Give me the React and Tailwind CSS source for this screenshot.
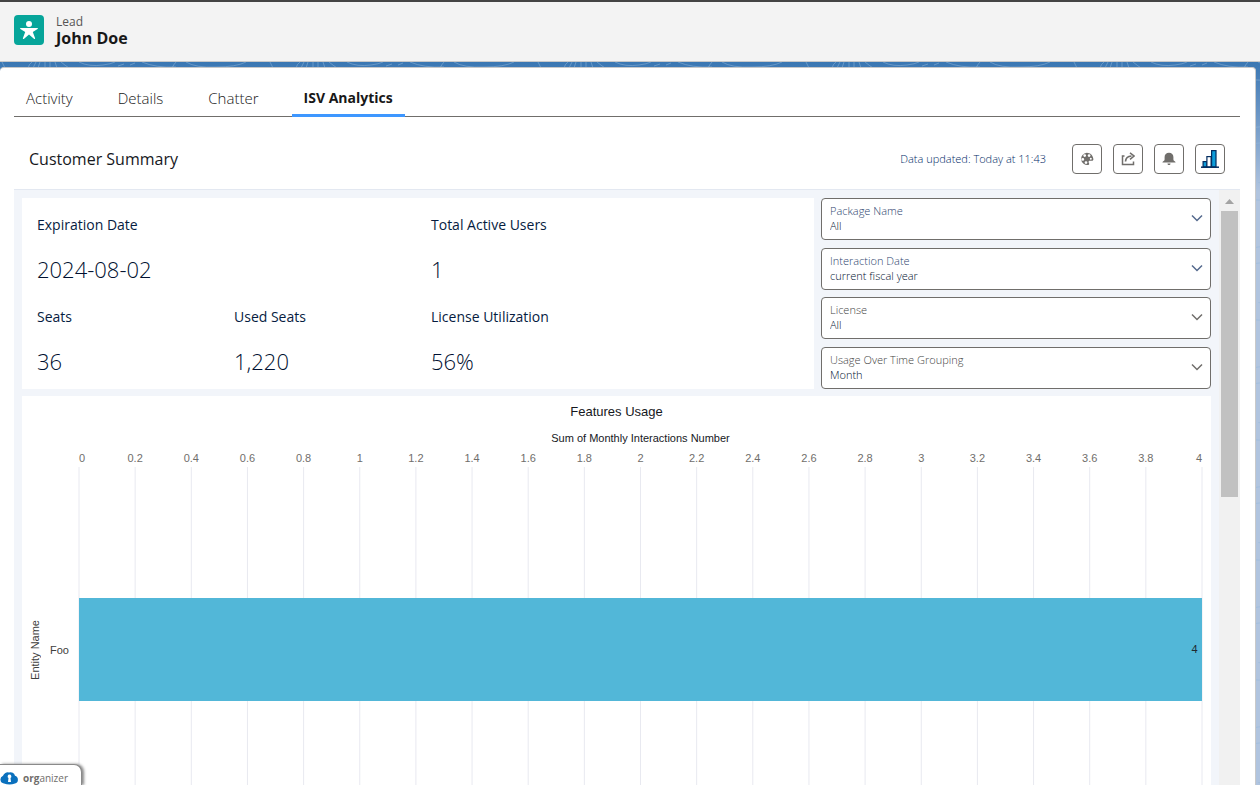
import React from 'react';
import clsx from 'clsx';

const TABS = ['Activity', 'Details', 'Chatter', 'ISV Analytics'];

const METRICS = [
    { label: 'Expiration Date', value: '2024-08-02', wide: true },
    { label: 'Total Active Users', value: '1', wide: true },
    { label: 'Seats', value: '36' },
    { label: 'Used Seats', value: '1,220' },
    { label: 'License Utilization', value: '56%' },
];

const FILTERS = [
    { id: 'package', label: 'Package Name', value: 'All', tinted: true },
    { id: 'date', label: 'Interaction Date', value: 'current fiscal year', tinted: true },
    { id: 'license', label: 'License', value: 'All' },
    { id: 'grouping', label: 'Usage Over Time Grouping', value: 'Month' },
];

const TICKS = Array.from({ length: 21 }, (_, i) => String(i * 2 / 10));

const LeadIcon = () => (
    <svg viewBox="0 0 30 30" className="size-[30px] rounded bg-[#06a59a]" aria-hidden="true">
        <circle cx="15" cy="8.9" r="3" fill="#fff" />
        <path
            d="M6.6 13h16.8c.6 0 .8.8.2 1.1l-4.8 3 2.3 6.2c.2.6-.4 1-.9.6L15 19.6 9.800 23.900c-.5.400-1.100 0-.9-.6l2.300-6.200-4.800-3c-.6-.3-.4-1.100.200-1.100z"
            fill="#fff"
        />
    </svg>
);

const PaletteIcon = () => (
    <svg viewBox="0 0 14 14" className="size-3.5" aria-hidden="true">
        <path
            fill="#706e6b"
            fillRule="evenodd"
            d="M6.800.7a6.200 6.200 0 1 0 1.500 12.300c1.200-.3 1-1.300.6-2-.6-1.100-.3-2.300.9-2.300h2.200c.9 0 1.400-.6 1.400-1.500C13.200 3.500 10.300.7 6.800.7zM4.700 2.200a1.400 1.400 0 1 1 0 2.800 1.400 1.400 0 0 1 0-2.800zm4.400 0a1.400 1.400 0 1 1 0 2.800 1.400 1.400 0 0 1 0-2.800zM2.800 6a1.400 1.400 0 1 1 0 2.800A1.400 1.400 0 0 1 2.800 6zm8-.2a1 1 0 1 1 0 2 1 1 0 0 1 0-2zM6 9.200A1.400 1.400 0 1 1 6 12a1.400 1.400 0 0 1 0-2.800z"
        />
    </svg>
);

const ShareIcon = () => (
    <svg viewBox="0 0 14 14" className="size-3.5" aria-hidden="true">
        <path d="M3.500 4H1.500v8.500h11V9.500" fill="none" stroke="#706e6b" strokeWidth="1.500" />
        <path d="M4.500 9.500c.2-3.500 2-5.300 6-5.500" fill="none" stroke="#706e6b" strokeWidth="1.700" />
        <path d="M9 .8 13 4 9 7.400" fill="none" stroke="#706e6b" strokeWidth="1.500" />
    </svg>
);

const BellIcon = () => (
    <svg viewBox="0 0 14 14" className="size-3.5" aria-hidden="true">
        <path
            d="M7 .8C4.300.8 2.600 2.700 2.600 5v2.400c0 .8-.4 1.300-1 1.700-.8.500-1.200.8-1.200 1.300h13.200c0-.5-.4-.8-1.200-1.300-.6-.4-1-.9-1-1.700V5C11.400 2.700 9.700.8 7 .8zM5.500 11.500h3c0 1-.7 1.500-1.500 1.500s-1.500-.5-1.500-1.500z"
            fill="#706e6b"
        />
    </svg>
);

const ChartIcon = () => (
    <svg viewBox="0 0 20 20" className="size-5" aria-hidden="true">
        <g stroke="#032d60" strokeWidth="1.200">
            <rect x="3.100" y="12.600" width="3.800" height="5.400" fill="#0d9dda" />
            <rect x="6.900" y="7.600" width="4.200" height="10.400" fill="#fff" />
            <rect x="11.600" y="1.600" width="4.400" height="16.400" fill="#0d9dda" />
            <path d="M1 18.200h18" strokeWidth="1.500" />
        </g>
    </svg>
);

const ACTIONS = [
    { label: 'Change theme', Icon: PaletteIcon },
    { label: 'Share', Icon: ShareIcon },
    { label: 'Notifications', Icon: BellIcon },
    { label: 'Open in Analytics', Icon: ChartIcon },
];

// Contour lines of the themed page background
const Contours = () => (
    <svg className="absolute inset-0 size-full" aria-hidden="true">
        <defs>
            <pattern id="contours" width="268" height="120" patternUnits="userSpaceOnUse">
                <g fill="none" stroke="#8fb6da" strokeOpacity="0.5">
                    <path d="M2 0q2 4 3 6M28 6q1-4 4-6M33 6l3-6M38 6l2-6M45 6V0M50 6V0M57 6l-2-6M61 0q5 4 8 6M79 0q10 5 24 3q8-1 12-3M118 4l6-2M130 3l5-2M142 0q14 6 34 5M172 6q2-4 4-6M186 0q10 6 30 5q20 0 30-5" />
                    <path d="M0 20q60 20 130 4t138 10M0 60q40-20 90 0t178-10M0 90q70 20 140 0t128 0M240 20q22 30 28 100M250 6q12 40 4 90" />
                </g>
            </pattern>
        </defs>
        <rect width="100%" height="100%" fill="url(#contours)" />
    </svg>
);

const Filter = ({ id, label, value, tinted }) => (
    <div className="relative h-[42px] rounded border border-[#706e6b] bg-white">
        <label
            htmlFor={id}
            className={clsx('block px-2 pt-1 text-[11px] leading-[15px]', tinted ? 'text-[#2c446e]' : 'text-[#444]')}
        >
            {label}
        </label>
        <select id={id} className="block w-full appearance-none bg-transparent px-2 text-[11px] leading-[15px] text-[#001030]">
            <option>{value}</option>
        </select>
        <svg
            viewBox="0 0 12 12"
            className={clsx('pointer-events-none absolute right-[7px] top-[13px] size-3', tinted ? 'text-[#54698d]' : 'text-[#706e6b]')}
            aria-hidden="true"
        >
            <path d="M1 3.500 6 8.500l5-5" fill="none" stroke="currentColor" strokeWidth="1.500" />
        </svg>
    </div>
);

const UsageChart = () => (
    <section className="min-h-[500px] flex-1 bg-white font-['Liberation_Sans',sans-serif] font-normal">
        <h3 className="pt-1.5 text-center text-[13px] leading-5 text-[#16181d]">Features Usage</h3>
        <div className="flex pr-[9px] pt-2">
            {/* Category axis */}
            <div className="flex w-[57px] shrink-0 items-center pl-[7px] pt-5 text-[11px] text-[#3e3e3c]">
                <span className="rotate-180 leading-3 [writing-mode:vertical-rl]">Entity Name</span>
                <span className="pl-[9px]">Foo</span>
            </div>
            <div className="min-w-0 flex-1">
                <p className="text-center text-[11px] leading-4 text-[#16181d]">Sum of Monthly Interactions Number</p>
                <svg className="mt-1 h-[400px] w-full overflow-visible text-[11px]" role="img" aria-label="Features Usage">
                    {TICKS.map((tick, i) => (
                        <g key={tick}>
                            <line x1={`${i * 5}%`} x2={`${i * 5}%`} y1="17" y2="400" stroke="#e8e9f0" strokeWidth="1" />
                            <text
                                x={`${i * 5}%`}
                                y="12"
                                fill="#706e6b"
                                textAnchor={i === 0 ? 'start' : i === 20 ? 'end' : 'middle'}
                            >
                                {tick}
                            </text>
                        </g>
                    ))}
                    <rect x="0" y="148" width="100%" height="103" fill="#52b7d8" />
                    <text x="99.600%" y="203" textAnchor="end" fill="#1f2a30">4</text>
                </svg>
            </div>
        </div>
    </section>
);

const App = () => {
    return (
        <div className="flex h-screen flex-col overflow-hidden font-['Open_Sans',sans-serif] font-light">
            {/* Record header */}
            <header className="flex h-[62px] shrink-0 items-start gap-3 border-b border-t-2 border-b-[#c9c9c9] border-t-[#444] bg-[#f3f3f3] px-3.5 pt-[13px]">
                <LeadIcon />
                <div>
                    <p className="text-xs font-normal leading-[14px] text-[#555]">Lead</p>
                    <h1 className="text-base font-bold leading-[18px] text-[#181818]">John Doe</h1>
                </div>
            </header>

            <main className="relative flex min-h-0 flex-1 flex-col bg-linear-to-b from-[#3a77b3] to-[#b0c4df] to-[130px] pr-1 pt-[5px]">
                <Contours />
                <div className="relative flex min-h-0 flex-1 flex-col rounded-t border-r border-t border-[#c9c9c9] bg-white pl-3.5 pr-[15px]">
                    <nav className="flex h-[49px] shrink-0 items-stretch gap-[21px] border-b border-[#706e6b]">
                        {TABS.map((tab, i) => (
                            <a
                                key={tab}
                                href="#"
                                className={clsx(
                                    '-mb-px flex items-center px-3 pt-3.5',
                                    i === 3
                                        ? 'border-b-3 border-[#3e97ff] text-sm font-bold text-[#181818]'
                                        : 'pb-[3px] text-[15px] text-[#181818]'
                                )}
                            >
                                {tab}
                            </a>
                        ))}
                    </nav>

                    <div className="flex h-[73px] shrink-0 items-center border-b border-[#e3e8f1] pl-[15px] pr-[15px] pt-3">
                        <h2 className="flex-1 text-base font-normal text-[#16181d]">Customer Summary</h2>
                        <span className="mr-[26px] text-[11px] text-[#002a66]">Data updated: Today at 11:43</span>
                        <div className="flex gap-[11px]">
                            {ACTIONS.map(({ label, Icon }) => (
                                <button
                                    key={label}
                                    aria-label={label}
                                    className="flex size-[30px] items-center justify-center rounded border border-[#706e6b] bg-white"
                                >
                                    <Icon />
                                </button>
                            ))}
                        </div>
                    </div>

                    <div className="flex min-h-0 flex-1">
                        <div className="flex min-w-0 flex-1 flex-col gap-[7px] overflow-hidden bg-[#f2f5fa] px-2 pt-2">
                            <div className="flex shrink-0 gap-[7px]">
                                <dl className="grid h-[191px] flex-1 grid-cols-4 grid-rows-2 bg-white pb-2 pr-1">
                                    {METRICS.map(({ label, value, wide }) => (
                                        <div key={label} className={clsx('pl-[15px] pt-4 text-[#061c3f]', wide && 'col-span-2')}>
                                            <dt className="text-sm font-normal leading-[22px]">{label}</dt>
                                            <dd className="pt-2 text-[22px] leading-[50px] text-[#001030]">{value}</dd>
                                        </div>
                                    ))}
                                </dl>
                                <div className="flex w-[390px] flex-col justify-between">
                                    {FILTERS.map((filter) => (
                                        <Filter key={filter.id} {...filter} />
                                    ))}
                                </div>
                            </div>
                            <UsageChart />
                        </div>

                        {/* Scroll track */}
                        <div className="flex w-[21px] flex-col items-center bg-[#f1f1f1]">
                            <svg viewBox="0 0 21 21" className="size-[21px]" aria-hidden="true">
                                <path d="M6 14h9l-4.500-5z" fill="#a3a3a3" />
                            </svg>
                            <div className="h-[286px] w-[17px] bg-[#c1c1c1]" />
                        </div>
                    </div>
                </div>
            </main>

            <a
                href="#"
                className="absolute bottom-0 left-0 flex h-[21px] w-[82px] items-center gap-1 rounded-tr-lg border-r border-t border-[#8a8a8a] bg-white pt-1.5 text-[10px] font-normal text-[#706e6b] shadow-[2px_0_3px_#888]"
            >
                <svg viewBox="0 0 19 14" className="h-3.5 w-[19px]" aria-hidden="true">
                    <path d="M4 12.500A4 4 0 0 1 3 4.800 5 5 0 0 1 9 1.500a4.500 4.500 0 0 1 6 3.300 4 4 0 0 1 0 7.700q-5.500 2-11 0z" fill="#0a70bd" />
                    <path d="M9.500 3.500a1.900 1.900 0 0 0-1 3.500L8 11h3l-.5-4a1.900 1.900 0 0 0-1-3.500z" fill="#fff" />
                </svg>
                <span><b>org</b>anizer</span>
            </a>
        </div>
    );
};

export default App;
